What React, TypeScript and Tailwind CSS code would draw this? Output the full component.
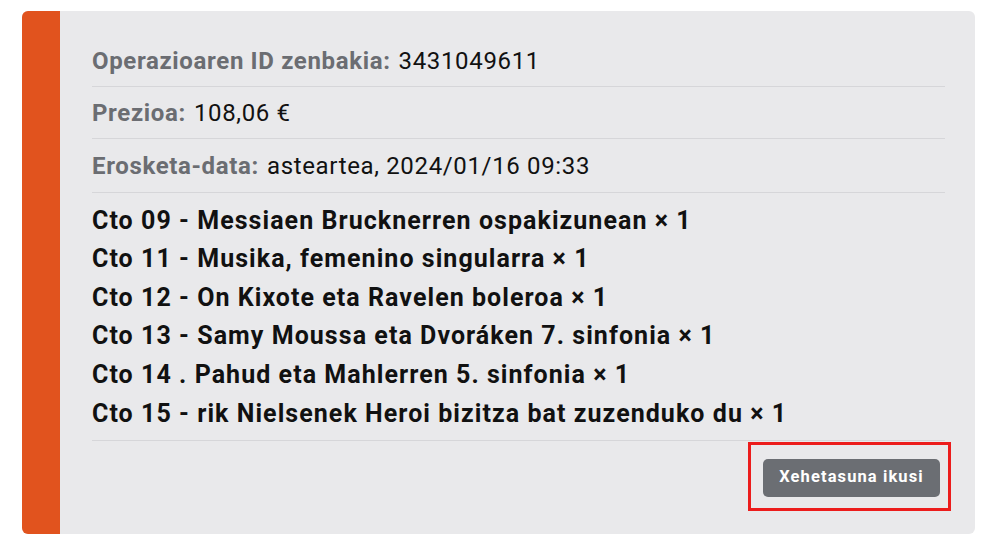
import React from "react";

const items = [
  "Cto 09 - Messiaen Brucknerren ospakizunean × 1",
  "Cto 11 - Musika, femenino singularra × 1",
  "Cto 12 - On Kixote eta Ravelen boleroa × 1",
  "Cto 13 - Samy Moussa eta Dvoráken 7. sinfonia × 1",
  "Cto 14 . Pahud eta Mahlerren 5. sinfonia × 1",
  "Cto 15 - rik Nielsenek Heroi bizitza bat zuzenduko du × 1",
];

export default function App() {
  return (
    <div
      className="w-[1000px] h-[548px] bg-white pl-[22px] pt-[11px]"
      style={{ fontFamily: "Roboto, 'Noto Sans', sans-serif" }}
    >
      <div className="flex w-[953px] h-[523px] rounded-[6px] overflow-hidden bg-[#e9e9eb]">
        <div className="w-[38px] bg-[#e1531e] shrink-0" />
        <div className="flex-1 pl-[32px] pr-[30px] pt-[24px] flex flex-col">
          <div className="h-[52px] flex items-center border-b border-[#d6d6d9] text-[24px] tracking-[0.65px]">
            <span className="font-bold text-[#6b6d72]">Operazioaren ID zenbakia:</span>
            <span className="ml-[8px] text-[#111]">3431049611</span>
          </div>
          <div className="h-[52px] flex items-center border-b border-[#d6d6d9] text-[24px] tracking-[0.65px]">
            <span className="font-bold text-[#6b6d72]">Prezioa:</span>
            <span className="ml-[8px] text-[#111]">108,06 €</span>
          </div>
          <div className="h-[54px] flex items-center border-b border-[#d6d6d9] text-[24px] tracking-[0.65px]">
            <span className="font-bold text-[#6b6d72]">Erosketa-data:</span>
            <span className="ml-[8px] text-[#111]">asteartea, 2024/01/16 09:33</span>
          </div>
          <div className="pt-[8px] pb-[7px] border-b border-[#d6d6d9]">
            {items.map((t) => (
              <div key={t} className="h-[38.6px] flex items-center text-[25px] tracking-[1.05px] font-bold text-[#111] whitespace-nowrap">
                {t}
              </div>
            ))}
          </div>
          <div className="flex justify-end mr-[-6px] mt-[1px]">
            <div className="border-[3px] border-[#ec1c1c] pl-[12px] pr-[8px] pt-[14px] pb-[11px]">
              <button className="h-[38px] w-[177px] rounded-[5px] bg-[#6b6e73] text-white font-bold text-[16.5px] tracking-[1.1px]">
                Xehetasuna ikusi
              </button>
            </div>
          </div>
        </div>
      </div>
    </div>
  );
}
